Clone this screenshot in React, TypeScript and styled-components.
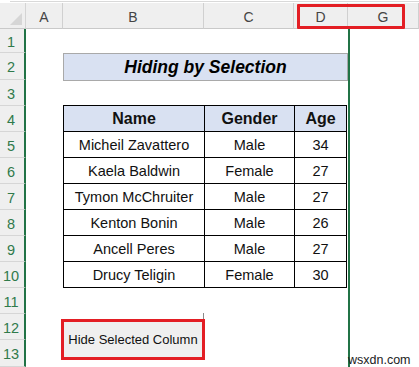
import React from "react";
import styled, { createGlobalStyle } from "styled-components";

const Global = createGlobalStyle`
  html, body { margin: 0; padding: 0; background: #ffffff; }
  body { width: 419px; height: 367px; overflow: hidden; font-family: "Liberation Sans", Arial, sans-serif; }
`;

const GREEN = "#217346";

const Sheet = styled.div`
  display: grid;
  grid-template-columns: 26px 37px 141px 90px 54px 1fr;
  grid-template-rows: 3px 26px 24px 27px repeat(10, 26px) 27px;
  width: 419px;
  height: 367px;
  background: #ffffff;
  position: relative;
`;

const TopStrip = styled.div`
  grid-column: 1 / -1;
  grid-row: 1;
  background: #ffffff;
  display: flex;
  align-items: flex-start;
  padding: 1px 0 0 10px;
  box-sizing: border-box;
`;

const TopLine = styled.div`
  flex: 1;
  height: 1px;
  background: #d9d9d9;
`;

const Corner = styled.div`
  grid-column: 1;
  grid-row: 2;
  background: #efefef;
  border-right: 1px solid #d4d4d4;
  border-bottom: 1px solid #c9c9c9;
  display: flex;
  align-items: flex-end;
  justify-content: flex-end;
  padding: 0 3px 3px 0;
`;

const ColHead = styled.div<{ $col: number }>`
  grid-column: ${(p) => p.$col};
  grid-row: 2;
  background: #efefef;
  border-right: 1px solid #d0d0d0;
  border-bottom: 1px solid #c9c9c9;
  display: flex;
  align-items: center;
  justify-content: center;
  font-size: 14px;
  color: #444444;
  padding-top: 2px;
`;

const RowHead = styled.div<{ $row: number }>`
  grid-column: 1;
  grid-row: ${(p) => p.$row};
  background: #efefef;
  border-bottom: 1px solid #d6d6d6;
  border-right: 2px solid ${GREEN};
  display: flex;
  align-items: center;
  justify-content: center;
  font-size: 14.5px;
  color: #2f7a4b;
  padding: 2px 2px 0 0;
`;

const Title = styled.div`
  grid-column: 3 / 6;
  grid-row: 4;
  margin: 0 0 -1px 0;
  background: #d9e1f2;
  border: 1px solid #a9a9a9;
  display: flex;
  align-items: center;
  justify-content: center;
  font-size: 17.5px;
  font-weight: bold;
  font-style: italic;
  color: #000;
  padding-top: 1px;
`;

const Table = styled.div`
  grid-column: 3 / 6;
  grid-row: 6 / 13;
  margin-right: 1px;
  display: grid;
  grid-template-columns: 141px 90px 1fr;
  grid-auto-rows: 26px;
  border-top: 1px solid #000;
  border-left: 1px solid #000;
  margin-top: -1px;
`;

const Cell = styled.div<{ $head?: boolean }>`
  border-right: 1px solid #000;
  border-bottom: 1px solid #000;
  display: flex;
  align-items: center;
  justify-content: center;
  background: ${(p) => (p.$head ? "#d9e1f2" : "#ffffff")};
  font-size: ${(p) => (p.$head ? "16px" : "14.5px")};
  font-weight: ${(p) => (p.$head ? "bold" : "normal")};
  color: #111;
  padding-top: 1px;
`;

const ButtonArea = styled.div`
  grid-column: 3;
  grid-row: 14 / 16;
  display: flex;
  margin: 5px -1px 7px -2px;
  position: relative;
`;

const Button = styled.div`
  flex: 1;
  box-sizing: border-box;
  border: 3px solid #e31e24;
  background: #efefef;
  display: flex;
  align-items: center;
  justify-content: center;
  font-size: 13px;
  color: #111;
  padding-bottom: 1px;
`;

const ButtonShadow = styled.div`
  position: absolute;
  right: 1px;
  top: -6px;
  width: 1px;
  height: 6px;
  background: #8a8a8a;
`;

const GreenLine = styled.div`
  grid-column: 6;
  grid-row: 3 / -1;
  border-left: 2px solid ${GREEN};
  position: relative;
`;

const Watermark = styled.div`
  position: absolute;
  left: -2px;
  bottom: 0;
  font-size: 12.5px;
  line-height: 14px;
  color: #222;
  font-family: "Liberation Sans", Arial, sans-serif;
`;

const HeaderMark = styled.div`
  grid-column: 5 / 7;
  grid-row: 2;
  margin: 1px 14px 0 3px;
  border: 3px solid #e31e24;
  border-radius: 1px;
  pointer-events: none;
`;

const cols = [
  { label: "A", col: 2 },
  { label: "B", col: 3 },
  { label: "C", col: 4 },
  { label: "D", col: 5 },
  { label: "G", col: 6 },
];

const data = [
  ["Micheil Zavattero", "Male", "34"],
  ["Kaela Baldwin", "Female", "27"],
  ["Tymon McChruiter", "Male", "27"],
  ["Kenton Bonin", "Male", "26"],
  ["Ancell Peres", "Male", "27"],
  ["Drucy Teligin", "Female", "30"],
];

export default function App() {
  return (
    <>
      <Global />
      <Sheet>
        <TopStrip>
          <TopLine />
        </TopStrip>
        <Corner>
          <svg width="12" height="12" viewBox="0 0 12 12">
            <polygon points="12,0 12,12 0,12" fill="#d6d6d6" />
          </svg>
        </Corner>
        {cols.map((c) => (
          <ColHead key={c.label} $col={c.col}>
            {c.label}
          </ColHead>
        ))}
        {Array.from({ length: 13 }, (_, i) => (
          <RowHead key={i} $row={i + 3}>
            {i + 1}
          </RowHead>
        ))}
        <Title>Hiding by Selection</Title>
        <Table>
          <Cell $head>Name</Cell>
          <Cell $head>Gender</Cell>
          <Cell $head>Age</Cell>
          {data.map((r) =>
            r.map((v, j) => <Cell key={r[0] + j}>{v}</Cell>)
          )}
        </Table>
        <ButtonArea>
          <ButtonShadow />
          <Button>Hide Selected Column</Button>
        </ButtonArea>
        <GreenLine>
          <Watermark>wsxdn.com</Watermark>
        </GreenLine>
        <HeaderMark />
      </Sheet>
    </>
  );
}
